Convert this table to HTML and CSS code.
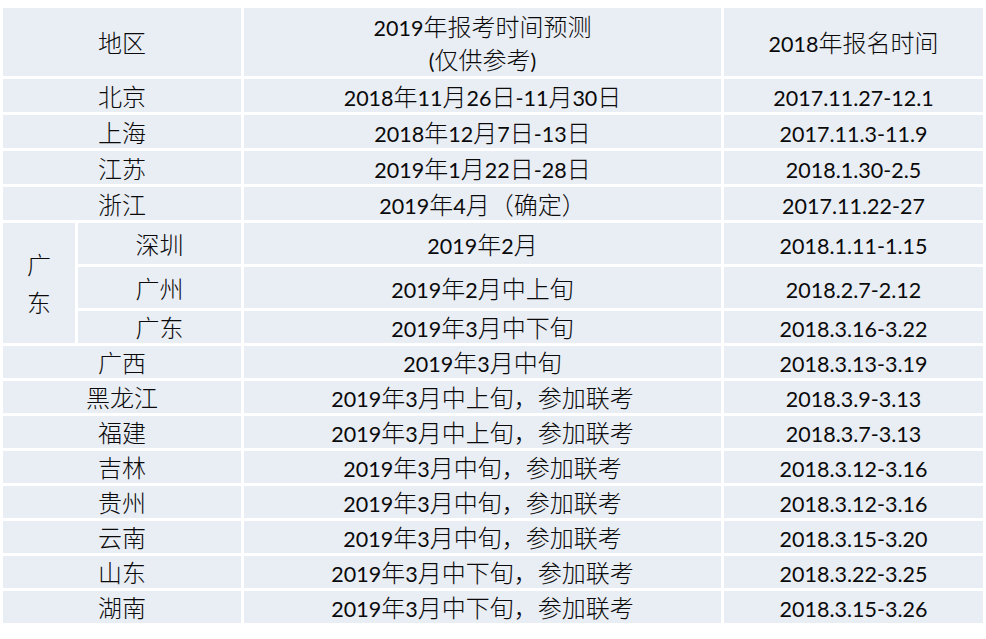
FILE: index.html
```html
<!DOCTYPE html>
<html lang="zh-CN">
<head>
<meta charset="utf-8">
<title>报考时间</title>
<link rel="stylesheet" href="styles.css">
</head>
<body>
<table class="sched">
  <colgroup>
    <col class="c-a">
    <col class="c-b">
    <col class="c-c">
    <col class="c-d">
  </colgroup>
  <tr class="r-head">
    <td colspan="2">地区</td>
    <td class="two"><span class="n">2019</span>年报考时间预测<br><span class="n">(</span>仅供参考<span class="n">)</span></td>
    <td><span class="n">2018</span>年报名时间</td>
  </tr>
  <tr class="r-top">
    <td colspan="2">北京</td>
    <td><span class="n">2018</span>年<span class="n">11</span>月<span class="n">26</span>日<span class="n">-11</span>月<span class="n">30</span>日</td>
    <td><span class="n">2017.11.27-12.1</span></td>
  </tr>
  <tr class="r-top">
    <td colspan="2">上海</td>
    <td><span class="n">2018</span>年<span class="n">12</span>月<span class="n">7</span>日<span class="n">-13</span>日</td>
    <td><span class="n">2017.11.3-11.9</span></td>
  </tr>
  <tr class="r-top">
    <td colspan="2">江苏</td>
    <td><span class="n">2019</span>年<span class="n">1</span>月<span class="n">22</span>日<span class="n">-28</span>日</td>
    <td><span class="n">2018.1.30-2.5</span></td>
  </tr>
  <tr class="r-top">
    <td colspan="2">浙江</td>
    <td><span class="n">2019</span>年<span class="n">4</span>月（确定）</td>
    <td><span class="n">2017.11.22-27</span></td>
  </tr>
  <tr class="r-tall">
    <td rowspan="3" class="prov">广<br>东</td>
    <td>深圳</td>
    <td><span class="n">2019</span>年<span class="n">2</span>月</td>
    <td><span class="n">2018.1.11-1.15</span></td>
  </tr>
  <tr class="r-tall">
    <td>广州</td>
    <td><span class="n">2019</span>年<span class="n">2</span>月中上旬</td>
    <td><span class="n">2018.2.7-2.12</span></td>
  </tr>
  <tr class="r-low">
    <td>广东</td>
    <td><span class="n">2019</span>年<span class="n">3</span>月中下旬</td>
    <td><span class="n">2018.3.16-3.22</span></td>
  </tr>
  <tr class="r-low">
    <td colspan="2">广西</td>
    <td><span class="n">2019</span>年<span class="n">3</span>月中旬</td>
    <td><span class="n">2018.3.13-3.19</span></td>
  </tr>
  <tr class="r-low">
    <td colspan="2">黑龙江</td>
    <td><span class="n">2019</span>年<span class="n">3</span>月中上旬，参加联考</td>
    <td><span class="n">2018.3.9-3.13</span></td>
  </tr>
  <tr class="r-low">
    <td colspan="2">福建</td>
    <td><span class="n">2019</span>年<span class="n">3</span>月中上旬，参加联考</td>
    <td><span class="n">2018.3.7-3.13</span></td>
  </tr>
  <tr class="r-low">
    <td colspan="2">吉林</td>
    <td><span class="n">2019</span>年<span class="n">3</span>月中旬，参加联考</td>
    <td><span class="n">2018.3.12-3.16</span></td>
  </tr>
  <tr class="r-low">
    <td colspan="2">贵州</td>
    <td><span class="n">2019</span>年<span class="n">3</span>月中旬，参加联考</td>
    <td><span class="n">2018.3.12-3.16</span></td>
  </tr>
  <tr class="r-low">
    <td colspan="2">云南</td>
    <td><span class="n">2019</span>年<span class="n">3</span>月中旬，参加联考</td>
    <td><span class="n">2018.3.15-3.20</span></td>
  </tr>
  <tr class="r-low">
    <td colspan="2">山东</td>
    <td><span class="n">2019</span>年<span class="n">3</span>月中下旬，参加联考</td>
    <td><span class="n">2018.3.22-3.25</span></td>
  </tr>
  <tr class="r-low">
    <td colspan="2">湖南</td>
    <td><span class="n">2019</span>年<span class="n">3</span>月中下旬，参加联考</td>
    <td><span class="n">2018.3.15-3.26</span></td>
  </tr>
</table>
</body>
</html>
```

FILE: styles.css
```css
html, body {
  margin: 0;
  padding: 0;
  background: #ffffff;
}

.sched {
  margin-top: 5px;
  width: 986px;
  table-layout: fixed;
  border-collapse: separate;
  border-spacing: 3px;
  font-family: "Noto Sans CJK SC", "Noto Sans", sans-serif;
  font-weight: 300;
  font-size: 24px;
  color: #0a0a0a;
}

.c-a { width: 72px; }
.c-b { width: 163px; }
.c-c { width: 477px; }
.c-d { width: 259px; }

.sched td {
  background: #e9edf4;
  padding: 0;
  text-align: center;
  vertical-align: middle;
  line-height: 26px;
  white-space: nowrap;
}

.n {
  font-family: "Lato", "Noto Sans", sans-serif;
  font-weight: 400;
  font-size: 21.5px;
  line-height: 16px;
}

.r-head { height: 68px; }
.r-top { height: 33px; }
.r-tall { height: 41px; }
.r-low { height: 32px; }

.sched td.two {
  line-height: 33px;
}

.sched td.prov {
  line-height: 38px;
}
```
